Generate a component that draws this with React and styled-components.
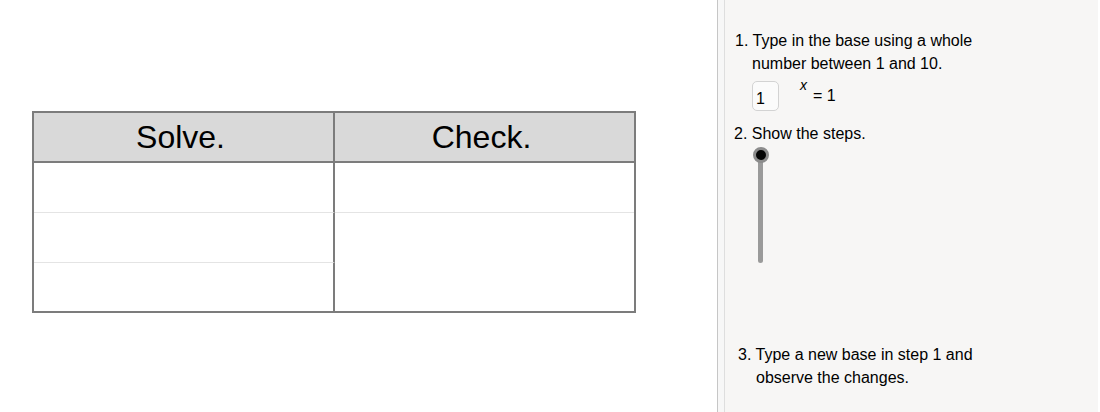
import React from "react";
import styled, { createGlobalStyle } from "styled-components";

const GlobalStyle = createGlobalStyle`
  html, body {
    margin: 0;
    padding: 0;
    background: #ffffff;
  }
  body {
    font-family: "Liberation Sans", Arial, sans-serif;
    color: #000;
  }
`;

const Page = styled.div`
  display: flex;
  width: 1100px;
  height: 412px;
  overflow: hidden;
`;

const Canvas = styled.div`
  width: 717px;
  flex: none;
  padding: 111px 0 0 32px;
  box-sizing: border-box;
  background: #ffffff;
`;

const Splitter = styled.div`
  width: 8px;
  flex: none;
  box-sizing: border-box;
  background: #f7f7f7;
  border-left: 1px solid #c6c6c6;
  border-right: 1px solid #dedede;
`;

const Panel = styled.div`
  width: 373px;
  flex: none;
  box-sizing: border-box;
  background: #f7f6f5;
  padding: 29px 0 0 0;
  font-size: 16px;
  line-height: 23px;
`;

const Grid = styled.div`
  display: grid;
  width: 604px;
  box-sizing: border-box;
  grid-template-columns: 301px 299px;
  grid-template-rows: 50px 50px 50px 48px;
  border: 2px solid #7c7c7c;
`;

const HeadCell = styled.div`
  background: #d9d9d9;
  border-bottom: 2px solid #7c7c7c;
  border-right: ${(p) => (p.$divider ? "2px solid #7c7c7c" : "none")};
  font-size: 32px;
  line-height: 48px;
  text-align: center;
  padding-right: 6px;
`;

const Cell = styled.div`
  background: #ffffff;
  border-right: ${(p) => (p.$divider ? "2px solid #7c7c7c" : "none")};
  border-bottom: ${(p) => (p.$line ? "1px solid #e4e4e4" : "none")};
  grid-row: ${(p) => (p.$span ? `span ${p.$span}` : "auto")};
`;

const Step = styled.div`
  width: ${(p) => p.$width}px;
  padding-left: ${(p) => p.$indent}px;
  text-indent: -${(p) => p.$hang}px;
  margin-top: ${(p) => p.$top || 0}px;
`;

const InputRow = styled.div`
  display: flex;
  align-items: flex-start;
  margin: 6px 0 0 27px;
`;

const NumberBox = styled.div`
  width: 27px;
  height: 30px;
  box-sizing: border-box;
  border: 1px solid #d3d3d3;
  border-radius: 5px;
  background: #fbfbfb;
  font-size: 16px;
  line-height: 16px;
  padding: 9px 0 0 3px;
`;

const Power = styled.div`
  display: flex;
  align-items: flex-start;
  margin-left: 21px;
`;

const Exponent = styled.span`
  font-size: 14px;
  font-style: italic;
  line-height: 14px;
  margin-top: -3px;
`;

const Equals = styled.span`
  font-size: 16px;
  line-height: 16px;
  margin: 7px 0 0 6px;
`;

const Slider = styled.div`
  position: relative;
  width: 16px;
  height: 116px;
  margin: 2px 0 0 28px;

  &::before {
    content: "";
    position: absolute;
    left: 5px;
    top: 6px;
    width: 5px;
    bottom: 0;
    border-radius: 3px;
    background: #9a9a9a;
  }
`;

const Knob = styled.div`
  position: absolute;
  left: 0;
  top: 0;
  width: 16px;
  height: 16px;
  box-sizing: border-box;
  border-radius: 50%;
  background: #050505;
  border: 3px solid #8c8c8c;
`;

export default function App() {
  return (
    <>
      <GlobalStyle />
      <Page>
        <Canvas>
          <Grid>
            <HeadCell $divider>Solve.</HeadCell>
            <HeadCell>Check.</HeadCell>
            <Cell $divider $line />
            <Cell $line />
            <Cell $divider $line />
            <Cell $span={2} />
            <Cell $divider />
          </Grid>
        </Canvas>
        <Splitter />
        <Panel>
          <Step $width={257} $indent={27} $hang={17}>
            1. Type in the base using a whole number between 1 and 10.
          </Step>
          <InputRow>
            <NumberBox>1</NumberBox>
            <Power>
              <Exponent>x</Exponent>
              <Equals>= 1</Equals>
            </Power>
          </InputRow>
          <Step $width={250} $indent={9} $hang={0} $top={11}>
            2. Show the steps.
          </Step>
          <Slider>
            <Knob />
          </Slider>
          <Step $width={256} $indent={31} $hang={18} $top={80}>
            3. Type a new base in step 1 and observe the changes.
          </Step>
        </Panel>
      </Page>
    </>
  );
}
